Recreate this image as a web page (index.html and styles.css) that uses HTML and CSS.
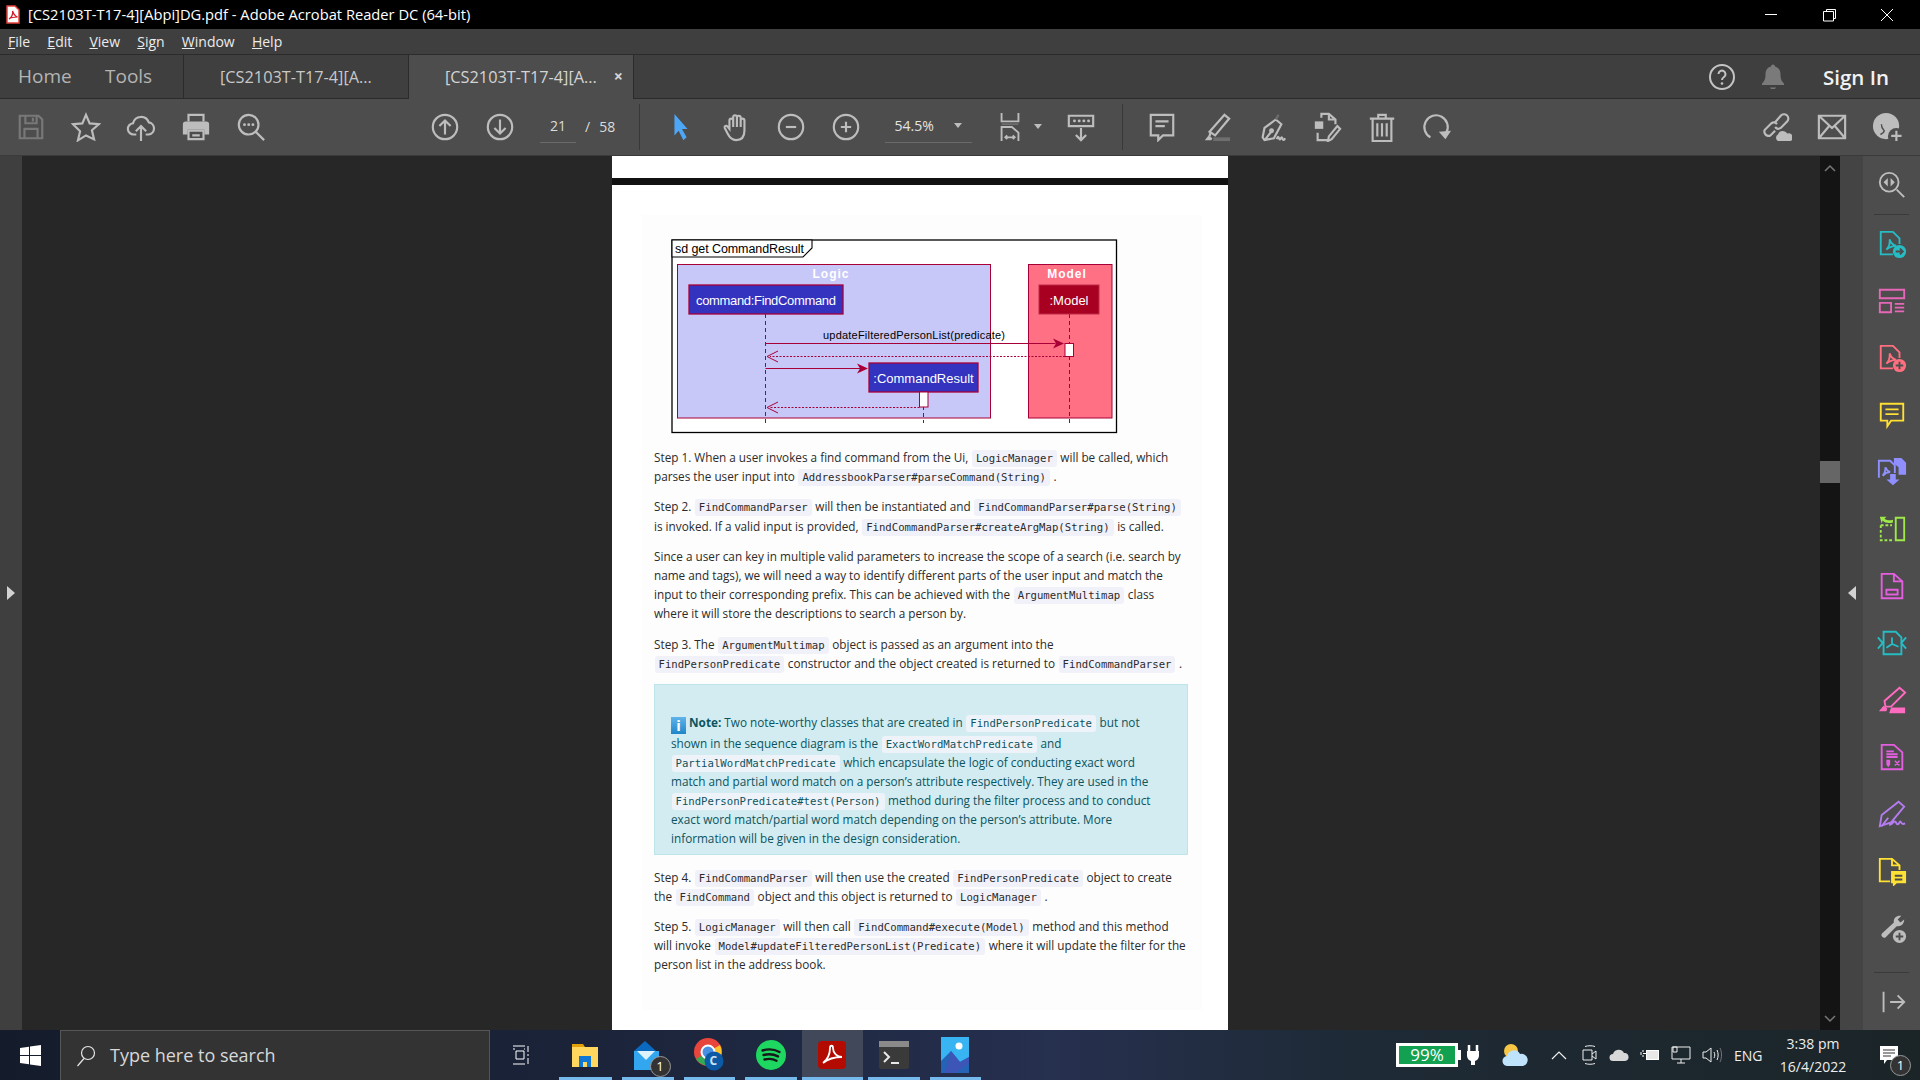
FILE: index.html
```html
<!DOCTYPE html>
<html lang="en">
<head>
    <meta charset="UTF-8">
    <title>[CS2103T-T17-4][Abpi]DG.pdf - Adobe Acrobat Reader DC (64-bit)</title>
    <link rel="stylesheet" href="styles.css">
</head>
<body>

<div class="titlebar">
    <svg class="app-icon" width="14" height="19" viewBox="0 0 14 19"><path d="M1 1h8l4 4v13H1z" fill="#fff" stroke="#e2403a" stroke-width="1.5"/><path d="M3 14c3-2 4-5 3.600-8 1 3 2 5 5 6-3 0-6 0-8.600 2z" fill="none" stroke="#d3202a" stroke-width="1.200"/></svg>
    <span class="title-text">[CS2103T-T17-4][Abpi]DG.pdf - Adobe Acrobat Reader DC (64-bit)</span>
    <div class="window-controls">
        <svg width="58" height="28" viewBox="0 0 58 28"><path d="M23 13.500h12" stroke="#fff"/></svg>
        <svg width="58" height="28" viewBox="0 0 58 28"><path d="M26.500 10.500v-2h9v9h-2M23.500 10.500h10v9.500h-10z" fill="none" stroke="#fff"/></svg>
        <svg width="58" height="28" viewBox="0 0 58 28"><path d="M23 8l12 12M35 8L23 20" stroke="#fff"/></svg>
    </div>
</div>

<div class="menubar">
    <span><u>F</u>ile</span>
    <span><u>E</u>dit</span>
    <span><u>V</u>iew</span>
    <span><u>S</u>ign</span>
    <span><u>W</u>indow</span>
    <span><u>H</u>elp</span>
</div>

<div class="tabbar">
    <div class="tab-link tab-home">Home</div>
    <div class="tab-link tab-tools">Tools</div>
    <div class="doc-tab">[CS2103T-T17-4][A...</div>
    <div class="doc-tab active">[CS2103T-T17-4][A...<span class="tab-close">×</span></div>
    <div class="tab-right">
        <svg class="help" width="28" height="28" viewBox="0 0 28 28"><circle cx="14" cy="14" r="12" fill="none" stroke="#c4c4c4" stroke-width="2"/><path d="M10.500 11a3.500 3.500 0 1 1 5.500 3c-1.400 1-2 1.500-2 3" fill="none" stroke="#c4c4c4" stroke-width="2"/><circle cx="14" cy="20.500" r="1.300" fill="#c4c4c4"/></svg>
        <svg class="bell" width="24" height="28" viewBox="0 0 24 28"><path d="M12 1.500c1.300 0 2 1 2 2 4 1 5.500 4 5.500 8 0 5 1.500 7 3.500 9v1.500H1V20.500c2-2 3.500-4 3.500-9 0-4 1.500-7 5.500-8 0-1 .7-2 2-2z" fill="#7a7a7a"/><path d="M9 24.500h6c-.5 2-5.500 2-6 0z" fill="#7a7a7a"/></svg>
        <span class="sign-in">Sign In</span>
    </div>
</div>

<div class="toolbar">
    <div class="tool dim"><svg viewBox="0 0 32 32"><path d="M4 4h20l4 4v20H4zM10 4v8h12V4M18 6v4M9 28v-10h14v10"/></svg></div>
    <div class="tool"><svg viewBox="0 0 32 32"><path d="M16 3l3.900 9.200 9.900.8-7.500 6.500 2.300 9.700L16 25l-8.600 5.200 2.300-9.700L2.200 13l9.900-.8z"/></svg></div>
    <div class="tool"><svg viewBox="0 0 32 32"><path d="M11 24H8.500a6 6 0 0 1-1-12A8.800 8.800 0 0 1 24.300 11a6.600 6.600 0 0 1 .2 13H21M16 31V15M10.500 20.500L16 15l5.500 5.500"/></svg></div>
    <div class="tool"><svg viewBox="0 0 32 32"><path d="M8 10V3h16v7"/><path class="solid" d="M5 10h22a3 3 0 0 1 3 3v11h-5v-5H7v5H2V13a3 3 0 0 1 3-3z"/><path d="M8 20h16v9H8zM12 25h8"/></svg></div>
    <div class="tool"><svg viewBox="0 0 32 32"><circle cx="13.500" cy="13.500" r="10.500"/><path d="M21 21l9 9"/><path class="dots" d="M9 13.500h.1M13.500 13.500h.1M18 13.500h.1"/></svg></div>

    <div class="tool nav-first"><svg viewBox="0 0 32 32"><circle cx="16" cy="16" r="13"/><path d="M16 24V9M10 15l6-6 6 6"/></svg></div>
    <div class="tool"><svg viewBox="0 0 32 32"><circle cx="16" cy="16" r="13"/><path d="M16 8v15M10 17l6 6 6-6"/></svg></div>
    <div class="page-num"><span class="page-cur">21</span><span class="page-sep">/</span><span>58</span></div>
    <div class="divider"></div>

    <div class="tool cursor"><svg viewBox="0 0 32 32"><path class="blue" d="M9 2l14 16h-6l5 9-3.500 3-5-10-4.500 5z"/></svg></div>
    <div class="tool"><svg viewBox="0 0 32 32"><path d="M9 18V9a2 2 0 0 1 4 0V5.500a2 2 0 0 1 4 0V6a2 2 0 0 1 4 0v3a2 2 0 0 1 4 0v11c0 6-3 10-9 10-5 0-7-3-9-7l-3-6c-.8-2 1.500-3 3-1.500zM13 9v7M17 6v10M21 9v7"/></svg></div>
    <div class="tool"><svg viewBox="0 0 32 32"><circle cx="16" cy="16" r="13"/><path d="M10.500 16h11"/></svg></div>
    <div class="tool"><svg viewBox="0 0 32 32"><circle cx="16" cy="16" r="13"/><path d="M10.500 16h11M16 10.500v11"/></svg></div>
    <div class="zoom-box"><span>54.5%</span><i class="caret"></i></div>
    <div class="tool fit"><svg viewBox="0 0 32 32"><path d="M7 1v9h18V1"/><path class="faint" d="M7 13h18"/><path d="M7 31V16h11l7 6v9M11 27h10M13 25l-2 2 2 2M19 25l2 2-2 2"/></svg><i class="caret"></i></div>
    <div class="tool scrolling"><svg viewBox="0 0 32 32"><path d="M3 4h26v11H3z"/><path class="dots" d="M9 9.500h.1M14 9.500h.1M19 9.500h.1M24 9.500h.1"/><path d="M16 17v13M10.500 24.500L16 30l5.500-5.500"/></svg></div>
    <div class="divider"></div>

    <div class="tool"><svg viewBox="0 0 32 32"><path d="M4 3h24v22H17l-5 5v-5H4zM9 10h14M9 15h10"/></svg></div>
    <div class="tool"><svg viewBox="0 0 32 32"><path d="M24 3l5 4-15 18-6-4zM9 22l-1 4"/><path class="solid" d="M3 30l4-5 4 3-1 2z"/><path class="faint-fill" d="M12 27h18v4H12z"/></svg></div>
    <div class="tool"><svg viewBox="0 0 32 32"><path d="M20 8l6 5-8 15-10 2-2-3 2-10zM9 29l7-9"/><circle cx="15.500" cy="20" r="1.500"/><path class="faint" d="M23 3l-3 5"/><path d="M21 29c2-5 2-1 3 0s2-4 3-1 2 2 3 0"/></svg></div>
    <div class="tool"><svg viewBox="0 0 32 32"><path class="solid" d="M3 10h9v8H3z"/><path d="M10 6V2h8l7 6v5M18 2v6h7M6 22v8h13M27 15l3 3-9 11-4 2 1-5z"/></svg></div>
    <div class="tool"><svg viewBox="0 0 32 32"><path d="M3 7h26M12 7V3h8v4M6 7v24h20V7M11 12v14M16 12v14M21 12v14"/></svg></div>
    <div class="tool"><svg viewBox="0 0 32 32"><path d="M9 27a12.500 12.500 0 1 1 17-5"/><path class="solid" d="M18 21l13-1-6 9z"/></svg></div>

    <div class="toolbar-right">
        <div class="tool"><svg viewBox="0 0 32 32"><path d="M14 20l-5 5a4.500 4.500 0 0 1-6-6l7-7a4.500 4.500 0 0 1 6 1M14 11l6-7a4.500 4.500 0 0 1 7 6l-7 7a4.500 4.500 0 0 1-6-1"/><path class="solid" d="M17 31a4 4 0 0 1 0-7 5.500 5.500 0 0 1 10-1 4 4 0 0 1 3 8z"/></svg></div>
        <div class="tool"><svg viewBox="0 0 32 32"><path d="M2 4h28v24H2zM2 4l14 13L30 4M2 28l11-13M30 28L19 15"/></svg></div>
        <div class="tool"><svg viewBox="0 0 32 32"><circle class="solid" cx="15" cy="15" r="14"/><circle class="cut" cx="26" cy="26" r="9"/><path class="cut-line" d="M9 24c2-1 4-2 4-4-2-2-3-4-3-7"/><path d="M26 20v11M20.500 25.500h11"/></svg></div>
    </div>
</div>

<div class="workspace">
    <div class="left-pane"><i class="arrow-right"></i></div>
    <div class="doc-area">
        <div class="page-end"></div>
        <div class="page-gap"></div>
        <div class="page">
            <div class="content">
                <svg class="diagram" width="447" height="195" viewBox="671 239 447 195">
                    <rect x="672" y="240" width="444.500" height="192.500" fill="#fff" stroke="#000" stroke-width="1.300"/>
                    <rect x="677.500" y="264.500" width="313" height="153.500" fill="#c8c8f8" stroke="#a80036"/>
                    <rect x="1028.500" y="264.500" width="83.500" height="153.500" fill="#ff7085" stroke="#a80036"/>
                    <path d="M672 257h131l9-9v-8H672z" fill="#fff" stroke="#000" stroke-width="1.100"/>
                    <text class="frame-label" x="675" y="253" textLength="129">sd get CommandResult</text>
                    <text class="box-title" x="831" y="278">Logic</text>
                    <text class="box-title" x="1067" y="278">Model</text>
                    <path d="M765.500 314v109M1069.500 314v109M923.500 392v31" stroke="#a80036" stroke-dasharray="4 3" fill="none"/>
                    <rect x="689" y="285" width="154" height="29" fill="#3333c0" stroke="#a80036" stroke-width="1.300"/>
                    <text class="participant" x="766" y="305" textLength="140">command:FindCommand</text>
                    <rect x="1039" y="285" width="60" height="29" fill="#a80020" stroke="#c02848" stroke-width="1"/>
                    <text class="participant" x="1069" y="305">:Model</text>
                    <rect x="869" y="363" width="109" height="29" fill="#3333c0" stroke="#a80036" stroke-width="1.300"/>
                    <text class="participant" x="923.500" y="383">:CommandResult</text>
                    <rect x="1065" y="343.500" width="8.500" height="13" fill="#fff" stroke="#a80036"/>
                    <rect x="919.500" y="392" width="8.500" height="15" fill="#fff" stroke="#a80036"/>
                    <text class="message" x="823" y="339" textLength="182">updateFilteredPersonList(predicate)</text>
                    <g fill="none" stroke="#a80036">
                        <path d="M765.500 343.500h290"/>
                        <path d="M765.500 368.500h95"/>
                        <path d="M1065 356.500H770M919.500 407.500H770" stroke-dasharray="2 1.500"/>
                        <path d="M778 351l-11 5.500 11 5.500M778 402l-11 5.500 11 5.500"/>
                    </g>
                    <path d="M1064 343.500l-11-5 3 5-3 5zM868 368.500l-11-5 3 5-3 5z" fill="#a80036"/>
                </svg>

                <p>Step 1. When a user invokes a find command from the Ui, <code>LogicManager</code> will be called, which<br>parses the user input into <code>AddressbookParser#parseCommand(String)</code> .</p>
                <p>Step 2. <code>FindCommandParser</code> will then be instantiated and <code>FindCommandParser#parse(String)</code><br>is invoked. If a valid input is provided, <code>FindCommandParser#createArgMap(String)</code> is called.</p>
                <p>Since a user can key in multiple valid parameters to increase the scope of a search (i.e. search by<br>name and tags), we will need a way to identify different parts of the user input and match the<br>input to their corresponding prefix. This can be achieved with the <code>ArgumentMultimap</code> class<br>where it will store the descriptions to search a person by.</p>
                <p>Step 3. The <code>ArgumentMultimap</code> object is passed as an argument into the<br><code>FindPersonPredicate</code> constructor and the object created is returned to <code>FindCommandParser</code> .</p>

                <div class="note">
                    <span class="note-icon">i</span> <b>Note:</b> Two note-worthy classes that are created in <code>FindPersonPredicate</code> but not<br>shown in the sequence diagram is the <code>ExactWordMatchPredicate</code> and<br><code>PartialWordMatchPredicate</code> which encapsulate the logic of conducting exact word<br>match and partial word match on a person’s attribute respectively. They are used in the<br><code>FindPersonPredicate#test(Person)</code> method during the filter process and to conduct<br>exact word match/partial word match depending on the person’s attribute. More<br>information will be given in the design consideration.
                </div>

                <p>Step 4. <code>FindCommandParser</code> will then use the created <code>FindPersonPredicate</code> object to create<br>the <code>FindCommand</code> object and this object is returned to <code>LogicManager</code> .</p>
                <p>Step 5. <code>LogicManager</code> will then call <code>FindCommand#execute(Model)</code> method and this method<br>will invoke <code>Model#updateFilteredPersonList(Predicate)</code> where it will update the filter for the<br>person list in the address book.</p>
            </div>
        </div>
    </div>
    <div class="scroll-strip">
        <svg width="12" height="8" viewBox="0 0 12 8"><path d="M1 7l5-5 5 5" fill="none" stroke="#777" stroke-width="1.500"/></svg>
        <div class="scroll-thumb"></div>
        <svg class="scroll-down" width="12" height="8" viewBox="0 0 12 8"><path d="M1 1l5 5 5-5" fill="none" stroke="#777" stroke-width="1.500"/></svg>
    </div>
    <div class="side-pane"><i class="arrow-left"></i></div>
    <div class="tools-panel">
        <div class="panel-tool grey first"><svg viewBox="0 0 32 32"><circle cx="13" cy="13" r="10"/><path d="M21 21l8 8"/><path class="fill" d="M11.500 8.500v9L7 13zM14.500 8.500v9L19 13z"/></svg></div>
        <div class="panel-line"></div>
        <div class="panel-tool teal"><svg viewBox="0 0 32 32"><path d="M17 27H4V3h13l7 7v6M10 22c3-3 4-6 3.500-11 1 4 3 6 7 7-4 0-7 1-10.500 4z"/><circle class="fill" cx="24" cy="24" r="7"/><path class="knock" d="M20 24h7M24.500 21l3 3-3 3"/></svg></div>
        <div class="panel-tool pink"><svg viewBox="0 0 32 32"><path d="M3 4h26v9H3zM3 18h12v10H3zM19 19h10M19 23h10M19 27h10"/></svg></div>
        <div class="panel-tool coral"><svg viewBox="0 0 32 32"><path d="M17 27H4V3h13l7 7v6M10 22c3-3 4-6 3.500-11 1 4 3 6 7 7-4 0-7 1-10.500 4z"/><circle class="fill" cx="24" cy="24" r="7"/><path class="knock" d="M20 24h8M24 20v8"/></svg></div>
        <div class="panel-tool yellow"><svg viewBox="0 0 32 32"><path d="M4 4h24v18H15l-4 6v-6H4zM9 10h14M9 15h14"/></svg></div>
        <div class="panel-tool violet"><svg viewBox="0 0 32 32"><path d="M2 22V4h12l5 5v8M6 20c2-2 3-5 3-9 1 3 2 4 5 5-3 0-5 1-8 4z"/><path class="fill" d="M18 1h8l5 5v13h-8V11l-5-4zM14 18h6v6h4l-7 6-7-6h4z"/></svg></div>
        <div class="panel-tool green"><svg viewBox="0 0 32 32"><path d="M20 4h9v24h-9z"/><path class="dash" d="M4 12h12M4 12v16h12"/><path class="fill" d="M3 3l7 0-2 2c3 2 6 2 9 1v3c-4 1-8 1-11-2l-1 3z"/></svg></div>
        <div class="panel-tool magenta"><svg viewBox="0 0 32 32"><path d="M5 3h13l9 8v18H5zM18 3v8h9M10 20h12v5H10z"/></svg></div>
        <div class="panel-tool teal"><svg viewBox="0 0 32 32"><path d="M7 4h13l6 6v18H7zM16 10v7l-6 4M16 17l7 3M1 10l5 6-5 6M31 10l-5 6 5 6"/></svg></div>
        <div class="panel-tool hot"><svg viewBox="0 0 32 32"><path d="M24 3l6 5-15 15H9l-1-6z"/><path class="fill" d="M2 28l5-6 4 3-1 3zM15 24h15v6H13z"/></svg></div>
        <div class="panel-tool magenta"><svg viewBox="0 0 32 32"><path d="M5 3h13l9 8v18H5zM10 10h8M10 13h12M10 16h12"/><path class="fill" d="M10 19h4v5l-2 3-2-3z"/><path class="thin" d="M19 20l5 5M24 20l-5 5"/></svg></div>
        <div class="panel-tool purple"><svg viewBox="0 0 32 32"><path d="M23 3l6 5-14 17-12 4 2-12zM5 29l7-9M13 28c5-2 4-4 6-4s1 3 3 3 2-4 3-3 1 4 5 2"/></svg></div>
        <div class="panel-tool yellow"><svg viewBox="0 0 32 32"><path d="M14 27H3V3h13l8 7v5M16 3v7h8"/><path class="fill" d="M15 16h16v13H21l-4 4v-4h-2z"/><path class="knock" d="M19 21h8M19 25h8"/></svg></div>
        <div class="panel-tool grey"><svg viewBox="0 0 32 32"><path d="M26 3c-4-1-9 2-8 7L5 22a3 3 0 0 0 4 4l12-12c4 1 8-2 8-7l-4 3-3-3z" class="fill"/><circle class="fill" cx="24" cy="25" r="7"/><path class="knock" d="M20 25h8M24 21v8"/></svg></div>
        <div class="panel-line low"></div>
        <div class="panel-tool grey"><svg viewBox="0 0 32 32"><path d="M7 5v22M14 16h15M22 9l7 7-7 7"/></svg></div>
    </div>
</div>

<div class="taskbar">
    <div class="start">
        <svg width="21" height="21" viewBox="0 0 21 21"><path d="M0 3l9-1.300V10H0zM10 1.500L21 0v10H10zM0 11h9v8.300L0 18zM10 11h11v10l-11-1.500z" fill="#fff"/></svg>
    </div>
    <div class="search-box">
        <svg width="20" height="22" viewBox="0 0 20 22"><circle cx="12" cy="8" r="6.500" fill="none" stroke="#e6e6e6" stroke-width="1.200"/><path d="M8 13.500L1.500 21" stroke="#e6e6e6" stroke-width="1.200"/></svg>
        <span>Type here to search</span>
    </div>
    <div class="task-item plain">
        <svg width="20" height="20" viewBox="0 0 20 20"><path d="M1 1h12M1 19h12M4 6h8v8H4zM1 4h2M13 4h-1M16 1v6M16 9v2M16 13v6" fill="none" stroke="#fff"/></svg>
    </div>
    <div class="task-item open folder-item">
        <svg width="30" height="30" viewBox="0 0 30 30"><path d="M2 4h11l2 3H2z" fill="#e3a008"/><path d="M2 7h26v20H2z" fill="#ffd75e"/><path d="M9 16h12v11H9z" fill="#0f78d4"/><path d="M13 22h4v5h-4z" fill="#ffd75e"/></svg>
    </div>
    <div class="task-item open">
        <svg width="30" height="30" viewBox="0 0 30 30"><path d="M12 1l11 10H1z" fill="#0b6abf"/><path d="M1 11h25v19H1z" fill="#32a6ee"/><path d="M4 11h18l-9 9z" fill="#dff1fb"/></svg>
        <span class="count-badge">1</span>
    </div>
    <div class="task-item open">
        <svg width="30" height="34" viewBox="0 0 30 34"><circle cx="14" cy="14" r="14" fill="#e8453c"/><path d="M14 14L26 7a14 14 0 0 1-6 19z" fill="#fbc02d"/><path d="M14 14l6 12A14 14 0 0 1 2 21z" fill="#34a853"/><circle cx="14" cy="14" r="6.500" fill="#4a90e2" stroke="#fff" stroke-width="2"/><circle cx="20" cy="23" r="9.500" fill="#0c5aa6"/></svg>
        <span class="chrome-c">C</span>
    </div>
    <div class="task-item open">
        <svg width="30" height="30" viewBox="0 0 30 30"><circle cx="15" cy="15" r="15" fill="#1ed760"/><path d="M6.500 10.500c6-1.800 12-1.300 17 1.500M7.500 15c5-1.400 10-1 14.500 1.400M8.500 19.500c4-1 8.500-.8 12 1.200" fill="none" stroke="#16181a" stroke-width="2.400" stroke-linecap="round"/></svg>
    </div>
    <div class="task-item open active-item">
        <svg width="30" height="30" viewBox="0 0 30 30"><rect x="1" y="1" width="28" height="28" rx="4" fill="#b30b00"/><path d="M6 23c5-4 7-9 7-15 0-3 3-3 3 0 0 5 4 9 9 9-6 0-13 1-19 6z" fill="none" stroke="#fff" stroke-width="1.800"/></svg>
    </div>
    <div class="task-item open">
        <svg width="30" height="30" viewBox="0 0 30 30"><rect y="1" width="30" height="28" rx="2" fill="#3a3a3a"/><rect y="1" width="30" height="6" fill="#8a8a8a"/><path d="M5 12l5 5-5 5" fill="none" stroke="#e8e8e8" stroke-width="2"/><path d="M12 23h8" stroke="#e8e8e8" stroke-width="2"/></svg>
    </div>
    <div class="task-item open">
        <svg width="28" height="36" viewBox="0 0 28 36"><rect width="28" height="36" fill="#39b4f3"/><circle cx="18" cy="9" r="3.500" fill="#fff"/><path d="M0 36V24l10-10 9 11 9-5v16z" fill="#2463b5"/><path d="M10 14l9 11 9-5v6L14 36H4z" fill="#3e55b8"/></svg>
    </div>

    <div class="tray">
        <div class="battery-meter"><span>99%</span></div>
        <svg class="plug" width="14" height="22" viewBox="0 0 14 22"><path d="M3 1v6M11 1v6" stroke="#fff" stroke-width="2.500"/><path d="M1 7h12v5a6 6 0 0 1-4 5v4H5v-4a6 6 0 0 1-4-5z" fill="#fff"/></svg>
        <svg class="weather" width="28" height="24" viewBox="0 0 28 24"><circle cx="10" cy="8" r="7" fill="#f6c644"/><path d="M7 23a5 5 0 0 1-1-10 7 7 0 0 1 13-2 6 6 0 0 1 3 12z" fill="#bfe3fb"/></svg>
        <svg class="sys chevron" width="16" height="10" viewBox="0 0 16 10"><path d="M1 9l7-7 7 7" fill="none" stroke="#f0f0f0" stroke-width="1.200"/></svg>
        <svg class="sys" width="16" height="20" viewBox="0 0 16 20"><path d="M3 1.500c3-1 7-1 10 0M3 18.500c3 1 7 1 10 0" stroke="#eee" fill="none"/><path d="M1 5h9v10H1zM10 9l4-3v8l-4-3" fill="none" stroke="#eee"/></svg>
        <svg class="sys" width="20" height="14" viewBox="0 0 20 14"><path d="M4 13a3.500 3.500 0 0 1 0-7 6 6 0 0 1 11-1 4 4 0 0 1 1 8z" fill="#d8d8d8"/></svg>
        <svg class="sys" width="20" height="14" viewBox="0 0 20 14"><path d="M1 4v3M3 2v2M3 7v2M3 5.500h3" stroke="#fff" fill="none"/><rect x="6.500" y="2.500" width="12" height="9" fill="#e8e8e8" stroke="#fff"/></svg>
        <svg class="sys" width="20" height="18" viewBox="0 0 20 18"><path d="M1 1h18v12H1zM10 13v4M6 17h8M2 1h4v5H2z" fill="none" stroke="#eee"/></svg>
        <svg class="sys" width="20" height="16" viewBox="0 0 20 16"><path d="M1 5h3l5-4v14l-5-4H1zM12 5c1 2 1 4 0 6M15 3c1.500 3 1.500 7 0 10" fill="none" stroke="#eee"/><path d="M18 1c2 4 2 10 0 14" fill="none" stroke="#777"/></svg>
        <span class="lang">ENG</span>
        <div class="clock"><span>3:38 pm</span><span>16/4/2022</span></div>
        <div class="notif">
            <svg width="20" height="20" viewBox="0 0 20 20"><path d="M1 1h18v14H8l-3 4v-4H1z" fill="#fff"/><path d="M4 5h12M4 8h12M4 11h8" stroke="#333"/></svg>
            <span class="count-badge">1</span>
        </div>
    </div>
</div>

</body>
</html>
```

FILE: styles.css
```css
* {
    box-sizing: border-box;
}

body {
    margin: 0;
    width: 1920px;
    height: 1080px;
    overflow: hidden;
    display: flex;
    flex-direction: column;
    font-family: "Open Sans", "Noto Sans", sans-serif;
    background-color: #272727;
}

/* title bar */
.titlebar {
    height: 29px;
    flex: none;
    display: flex;
    align-items: center;
    background-color: #000;
    color: #fff;
    font-size: 14.700px;
    padding-left: 6px;
}

.app-icon {
    margin-right: 8px;
}

.title-text {
    margin-top: -2px;
}

.window-controls {
    margin-left: auto;
    margin-right: 4px;
    display: flex;
    height: 28px;
}

.window-controls svg {
    display: block;
}

/* menu bar */
.menubar {
    height: 26px;
    flex: none;
    display: flex;
    align-items: center;
    gap: 17.200px;
    padding-left: 8px;
    background-color: #3f3f3f;
    border-bottom: 1px solid #2b2b2b;
    color: #ececec;
    font-size: 14px;
}

/* tabs */
.tabbar {
    height: 44px;
    flex: none;
    display: flex;
    background-color: #3f3f3f;
    border-bottom: 1px solid #2b2b2b;
    color: #c8c8c8;
}

.tab-link {
    font-size: 19px;
    line-height: 42px;
    color: #b4b4b4;
}

.tab-home {
    margin-left: 18px;
    width: 87px;
}

.tab-tools {
    width: 78px;
}

.doc-tab {
    width: 225px;
    margin-bottom: -1px;
    padding-left: 36px;
    border-left: 1px solid #2b2b2b;
    font-size: 16.300px;
    line-height: 44px;
    position: relative;
}

.doc-tab.active {
    background-color: #4d4d4d;
    border-right: 1px solid #2b2b2b;
    color: #d4d4d4;
    width: 226px;
}

.tab-close {
    position: absolute;
    right: 10px;
    top: -1px;
    font-weight: bold;
    font-size: 16px;
}

.tab-right {
    margin-left: auto;
    display: flex;
    align-items: center;
}

.bell {
    margin-left: 25px;
}

.sign-in {
    margin-left: 38px;
    margin-right: 31px;
    font-size: 20.500px;
    font-weight: 600;
    color: #f2f2f2;
}

/* main toolbar */
.toolbar {
    height: 57px;
    flex: none;
    display: flex;
    align-items: center;
    padding: 0 6px 1px 3px;
    background-color: #4d4d4d;
    border-bottom: 1px solid #3a3a3a;
}

.tool {
    width: 55px;
    height: 34px;
    flex: none;
    display: flex;
    align-items: center;
    justify-content: center;
    position: relative;
}

.tool svg {
    width: 30px;
    height: 30px;
    fill: none;
    stroke: #bdbdbd;
    stroke-width: 2.300;
}

.tool.dim svg {
    stroke: #787878;
}

.tool .solid {
    fill: #bdbdbd;
    stroke: none;
}

.tool .faint {
    stroke: #6e6e6e;
}

.tool .faint-fill {
    fill: #6e6e6e;
    stroke: none;
}

.tool .blue {
    fill: #4ea6f7;
    stroke: none;
}

.tool .cut {
    fill: #4d4d4d;
    stroke: none;
}

.tool .cut-line {
    stroke: #4d4d4d;
    stroke-width: 1.500;
}

.tool .dots {
    stroke-linecap: round;
    stroke-width: 3;
}

.nav-first {
    margin-left: 139px;
}

.page-num {
    width: 112px;
    flex: none;
    display: flex;
    align-items: center;
    color: #dcdcdc;
    font-size: 14px;
    padding-left: 13px;
}

.page-cur {
    width: 36px;
    text-align: center;
    border-bottom: 1px solid #6a6a6a;
    padding: 5px 0 7px;
}

.page-sep {
    margin: 0 9px;
}

.divider {
    width: 1px;
    height: 46px;
    flex: none;
    background-color: #383838;
}

.zoom-box {
    width: 87px;
    margin-left: 11px;
    margin-right: 18px;
    flex: none;
    display: flex;
    align-items: center;
    justify-content: space-between;
    color: #e4e4e4;
    font-size: 14px;
    border-bottom: 1px solid #6a6a6a;
    padding: 5px 10px 7px 10px;
}

.caret {
    width: 0;
    height: 0;
    border-left: 4px solid transparent;
    border-right: 4px solid transparent;
    border-top: 5px solid #bdbdbd;
}

.fit {
    width: 40px;
}

.fit .caret {
    position: absolute;
    right: -12px;
    top: 14px;
}

.fit svg {
    stroke-width: 2;
}

.scrolling {
    margin-left: 24px;
    margin-right: 13px;
}

.divider + .tool {
    margin-left: 12px;
}

.divider + .cursor {
    margin-left: 13.500px;
}

.toolbar-right {
    margin-left: auto;
    display: flex;
}

/* document area */
.workspace {
    height: 874px;
    flex: none;
    display: flex;
}

.left-pane {
    width: 22px;
    flex: none;
    display: flex;
    align-items: center;
    justify-content: center;
    background-color: #3f3f3f;
}

.arrow-right {
    width: 0;
    height: 0;
    margin-top: -1px;
    border-top: 7px solid transparent;
    border-bottom: 7px solid transparent;
    border-left: 8px solid #d2d2d2;
}

.doc-area {
    flex: 1;
    background-color: #272727;
    padding-left: 590px;
    overflow: hidden;
}

.page-end {
    width: 616px;
    height: 22px;
    background-color: #fff;
}

.page-gap {
    width: 616px;
    height: 7px;
    background-color: #111;
}

.page {
    width: 616px;
    height: 845px;
    padding: 30px 12px 0 30px;
    background-color: #fff;
    color: #2b2b2b;
    font-size: 11.750px;
    line-height: 19.200px;
}

.content {
    background-color: #fdfdfd;
    padding: 24px 0 24px 12px;
    width: 560px;
}

.diagram {
    display: block;
    margin: 0 0 14px 17px;
}

.frame-label {
    font: 12.500px "Liberation Sans", sans-serif;
    fill: #000;
}

.box-title {
    font: bold 12px "Liberation Sans", sans-serif;
    letter-spacing: 1px;
    fill: #fff;
    text-anchor: middle;
}

.participant {
    font: 13px "Liberation Sans", sans-serif;
    fill: #fff;
    text-anchor: middle;
}

.message {
    font: 11px "Liberation Sans", sans-serif;
    fill: #000;
}

p {
    margin: 0 0 11px;
    white-space: nowrap;
    width: 535px;
}

code {
    font-family: "DejaVu Sans Mono", monospace;
    font-size: 10.650px;
    line-height: 1;
    padding: 2px 4px;
    margin: 0 .5px;
    background-color: #f1f1fa;
    border-radius: 3px;
}

.note {
    width: 534px;
    height: 171px;
    margin-bottom: 12.500px;
    padding: 28px 0 0 16px;
    white-space: nowrap;
    line-height: 18.900px;
    background-color: #d2ecf1;
    border: 1px solid #bee5eb;
    color: #0c5460;
}

.note code {
    background-color: #eef3fa;
    color: #0c5460;
}

.note-icon {
    display: inline-block;
    width: 15px;
    height: 17px;
    line-height: 17px;
    vertical-align: -4px;
    text-align: center;
    background: linear-gradient(#5fb4ea, #1f86c9);
    color: #fff;
    font-weight: bold;
    font-size: 15px;
}

/* scrollbar and right hand tools */
.scroll-strip {
    width: 20px;
    flex: none;
    display: flex;
    flex-direction: column;
    align-items: center;
    padding-top: 8px;
    background-color: #141414;
}

.scroll-thumb {
    width: 20px;
    height: 22px;
    margin-top: 289px;
    background-color: #666;
}

.scroll-down {
    margin-top: auto;
    margin-bottom: 7px;
}

.side-pane {
    width: 23px;
    flex: none;
    display: flex;
    align-items: center;
    justify-content: center;
    background-color: #444;
}

.arrow-left {
    width: 0;
    height: 0;
    margin-top: -1px;
    border-top: 7px solid transparent;
    border-bottom: 7px solid transparent;
    border-right: 8px solid #d2d2d2;
}

.tools-panel {
    width: 57px;
    flex: none;
    display: flex;
    flex-direction: column;
    align-items: center;
    background-color: #4d4d4d;
}

.panel-tool {
    width: 57px;
    height: 57px;
    flex: none;
    display: flex;
    align-items: center;
    justify-content: center;
    color: #bdbdbd;
}

.panel-tool.first {
    height: 58px;
}

.panel-tool svg {
    width: 30px;
    height: 30px;
    fill: none;
    stroke: currentColor;
    stroke-width: 2;
}

.panel-tool .fill {
    fill: currentColor;
    stroke: none;
}

.panel-tool .knock {
    stroke: #4d4d4d;
}

.panel-tool .dash {
    stroke-dasharray: 3 2;
}

.panel-tool .thin {
    stroke-width: 1.500;
}

.panel-line {
    width: 35px;
    height: 1px;
    flex: none;
    background-color: #3a3a3a;
}

.panel-line.low {
    margin-top: 16px;
}

.grey { color: #bdbdbd; }
.teal { color: #25bcc4; }
.pink { color: #e667b8; }
.coral { color: #ff6f80; }
.yellow { color: #ffe034; }
.violet { color: #8f8fff; }
.green { color: #9fe84a; }
.magenta { color: #e45fe0; }
.hot { color: #ff6bc0; }
.purple { color: #b57cf0; }

/* taskbar */
.taskbar {
    height: 50px;
    flex: none;
    display: flex;
    align-items: center;
    background: linear-gradient(90deg, #141c2c 0, #1a2338 30%, #26304f 55%, #1e2a36 70%, #1b2528 100%);
    color: #fff;
}

.start {
    width: 60px;
    height: 50px;
    flex: none;
    display: flex;
    align-items: center;
    justify-content: center;
}

.search-box {
    width: 430px;
    height: 50px;
    flex: none;
    display: flex;
    align-items: center;
    padding-left: 15px;
    gap: 14px;
    background-color: #333;
    border: 1px solid #565656;
    border-bottom: none;
    color: #d8d8d8;
    font-size: 18px;
}

.search-box span {
    margin-top: -2px;
}

.task-item {
    width: 61.500px;
    height: 50px;
    flex: none;
    display: flex;
    align-items: center;
    justify-content: center;
    position: relative;
}

.task-item.plain {
    width: 63.500px;
}

.task-item.folder-item {
    width: 63.500px;
}

.task-item.open::after {
    content: "";
    position: absolute;
    left: 5px;
    right: 5px;
    bottom: 0;
    height: 3px;
    background-color: #76b9ed;
}

.active-item {
    background-color: #414859;
}

.active-item.open::after {
    left: 0;
    right: 0;
}

.count-badge {
    position: absolute;
    right: 8px;
    bottom: 3px;
    width: 21px;
    height: 21px;
    border-radius: 50%;
    border: 1px solid #9a9a9a;
    background-color: #333;
    color: #fff;
    font-size: 13px;
    line-height: 19px;
    text-align: center;
}

.chrome-c {
    position: absolute;
    left: 31px;
    top: 22px;
    font-size: 12px;
    font-weight: bold;
    color: #cfe3f7;
}

.tray {
    margin-left: auto;
    display: flex;
    align-items: center;
    height: 50px;
}

.battery-meter {
    width: 62px;
    height: 24px;
    border: 3px solid #fff;
    background-color: #12a150;
    color: #fff;
    font-size: 17px;
    line-height: 18px;
    text-align: center;
    position: relative;
}

.battery-meter::after {
    content: "";
    position: absolute;
    right: -6px;
    top: 4px;
    width: 3px;
    height: 10px;
    background-color: #fff;
}

.plug {
    margin-left: 8px;
}

.weather {
    margin-left: 21px;
}

.sys {
    margin-left: 11px;
}

.chevron {
    margin-left: 22px;
    margin-right: 4px;
}

.lang {
    font-size: 14px;
    margin-left: 12px;
    color: #eee;
    width: 30px;
}

.clock {
    width: 90px;
    margin-left: 4px;
    display: flex;
    flex-direction: column;
    align-items: center;
    gap: 5px;
    font-size: 14px;
    line-height: 18px;
    color: #eee;
}

.notif {
    width: 62px;
    height: 50px;
    flex: none;
    display: flex;
    align-items: center;
    justify-content: center;
    position: relative;
}

.notif .count-badge {
    right: 9px;
    bottom: 4px;
}
```
